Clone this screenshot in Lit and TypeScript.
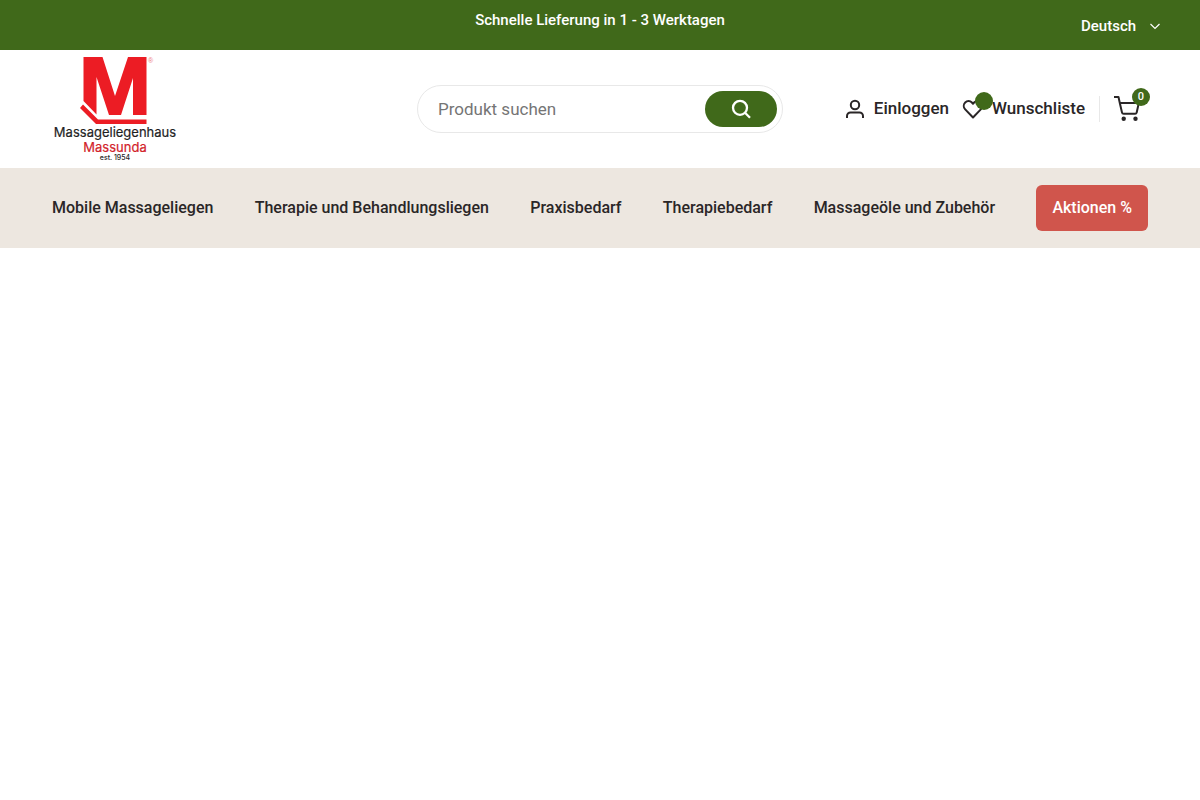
import { LitElement, html, css } from "lit";
import { customElement, property } from "lit/decorators.js";

const GREEN = css`#40691a`;
const INK = css`#2a2627`;

@customElement("brand-logo")
class BrandLogo extends LitElement {
  static styles = css`
    :host { display: block; }
    .logo { display: block; width: 126px; height: 108px; }
    .name { font: 13px Inter, "Liberation Sans", sans-serif; fill: #1f1f1f; stroke: #1f1f1f; stroke-width: 0.2; }
    .brand { font: 13px Inter, "Liberation Sans", sans-serif; fill: #d2232a; stroke: #d2232a; stroke-width: 0.2; }
    .since { font: 500 7px Inter, "Liberation Sans", sans-serif; fill: #1f1f1f; }
    .mark { font: 7px "Liberation Sans", sans-serif; fill: #ee7a80; }
  `;
  render() {
    return html`
      <svg class="logo" viewBox="0 0 126 108" role="img" aria-label="Massageliegenhaus Massunda est. 1954">
        <g fill="#ec1c24">
          <path d="M31.500 2h19l12.500 39L76 2h18.500v58H81V23L69 60H57L44.500 22v37.500L31.500 46z" />
          <path d="M31 49.500l-3 3.500 16 16h50.500v-4.500H46z" />
        </g>
        <text class="mark" x="96" y="8">®</text>
        <text class="name" x="63" y="82" text-anchor="middle">Massageliegenhaus</text>
        <text class="brand" x="63" y="97" text-anchor="middle">Massunda</text>
        <text class="since" x="63" y="105" text-anchor="middle">est. 1954</text>
      </svg>
    `;
  }
}

@customElement("top-bar")
class TopBar extends LitElement {
  static styles = css`
    :host { display: block; background: ${GREEN}; color: #fff; }
    .bar {
      display: grid;
      grid-template-columns: 1fr auto 1fr;
      min-height: 50px;
      padding: 0 39px;
      font-size: 15px;
      font-weight: 500;
      line-height: 20px;
    }
    .message { grid-column: 2; margin: 0; padding-top: 10px; }
    .language { display: grid; justify-self: end; align-content: start; align-items: center; padding-top: 16px; }
    .choice {
      grid-area: 1 / 1;
      appearance: none;
      width: 80px;
      height: 20px;
      padding: 0;
      border: 0;
      background: transparent;
      color: inherit;
      font: inherit;
      cursor: pointer;
    }
    .choice option { color: #222; }
    .arrow { grid-area: 1 / 1; justify-self: end; width: 12px; height: 8px; pointer-events: none; }
  `;
  render() {
    return html`
      <div class="bar">
        <p class="message">Schnelle Lieferung in 1 - 3 Werktagen</p>
        <div class="language">
          <select class="choice" aria-label="Sprache">
            <option selected>Deutsch</option>
          </select>
          <svg class="arrow" viewBox="0 0 12 8" fill="none" stroke="currentColor" stroke-width="1.200">
            <path d="M1.500 2 6 6.500 10.500 2" />
          </svg>
        </div>
      </div>
    `;
  }
}

@customElement("shop-header")
class ShopHeader extends LitElement {
  @property({ type: Number }) cartCount = 0;

  static styles = css`
    :host { display: block; background: #fff; color: ${INK}; }
    .header {
      display: grid;
      grid-template-columns: 1fr minmax(0, 366px) 1fr;
      align-items: center;
      min-height: 118px;
      padding: 0 52px;
    }
    .home { justify-self: start; }
    .search {
      display: flex;
      align-items: center;
      box-sizing: border-box;
      height: 48px;
      padding: 0 5px 0 20px;
      border: 1px solid #e8e8e8;
      border-radius: 24px;
    }
    .query {
      flex: 1;
      min-width: 0;
      padding: 0;
      border: 0;
      outline: 0;
      background: transparent;
      color: inherit;
      font: 400 17px Roboto, sans-serif;
    }
    .query::placeholder { color: #757575; opacity: 1; }
    .submit {
      display: grid;
      place-items: center;
      width: 72px;
      height: 36px;
      padding: 0;
      border: 0;
      border-radius: 18px;
      background: ${GREEN};
      color: #fff;
      cursor: pointer;
    }
    .actions { display: flex; align-items: center; justify-self: end; padding-right: 8px; }
    .action {
      display: flex;
      align-items: center;
      color: inherit;
      text-decoration: none;
      font-size: 17px;
      font-weight: 500;
      line-height: 24px;
    }
    .login { gap: 7px; margin-right: 12px; }
    .wish { gap: 7px; }
    .label { padding-bottom: 2px; }
    .icon {
      display: block;
      width: 24px;
      height: 24px;
      fill: none;
      stroke: currentColor;
      stroke-width: 2;
      stroke-linejoin: round;
    }
    .holder { position: relative; }
    .badge {
      position: absolute;
      top: -5px;
      right: -8px;
      width: 18px;
      height: 18px;
      border-radius: 50%;
      background: ${GREEN};
      color: #fff;
      font-size: 11px;
      line-height: 18px;
      text-align: center;
    }
    .cart { margin-left: 14px; padding-left: 14px; border-left: 1px solid #e8e8e8; }
    .trolley { width: 26px; height: 26px; }
    .count { top: -8px; right: -10px; }
  `;

  render() {
    return html`
      <header class="header">
        <a class="home" href="#" aria-label="Startseite"><brand-logo></brand-logo></a>
        <form class="search" role="search">
          <input class="query" type="search" placeholder="Produkt suchen" aria-label="Produkt suchen" />
          <button class="submit" type="button" aria-label="Suchen">
            <svg class="icon" viewBox="0 0 24 24">
              <g stroke-width="2.300">
                <circle cx="11" cy="10.800" r="7" />
                <path d="m16 15.800 5 5" />
              </g>
            </svg>
          </button>
        </form>
        <div class="actions">
          <a class="action login" href="#">
            <svg class="icon" viewBox="0 0 24 24">
              <circle cx="12" cy="8" r="4.200" />
              <path d="M4 21v-2a3.500 3.500 0 0 1 3.500-3.500h9A3.500 3.500 0 0 1 20 19v2" />
            </svg>
            <span class="label">Einloggen</span>
          </a>
          <a class="action wish" href="#">
            <span class="holder">
              <svg class="icon" viewBox="0 0 24 24">
                <path d="M12 20.500 4.200 12.400a4.900 4.900 0 0 1 0-6.900 4.700 4.700 0 0 1 6.700 0L12 6.700l1.100-1.200a4.700 4.700 0 0 1 6.700 0 4.900 4.900 0 0 1 0 6.900z" />
              </svg>
              <span class="badge"></span>
            </span>
            <span class="label">Wunschliste</span>
          </a>
          <a class="action cart" href="#" aria-label="Warenkorb">
            <span class="holder">
              <svg class="icon trolley" viewBox="0 0 26 26">
                <path d="M0 1h4.500l1.300 6 2.200 9.500q.3 1.300 1.600 1.300h11.500q1.300 0 1.600-1.300L24.800 7h-19" />
                <circle cx="9.700" cy="22.700" r="2.200" fill="currentColor" stroke="none" />
                <circle cx="21.500" cy="22.700" r="2.200" fill="currentColor" stroke="none" />
              </svg>
              <span class="badge count">${this.cartCount}</span>
            </span>
          </a>
        </div>
      </header>
    `;
  }
}

@customElement("main-nav")
class MainNav extends LitElement {
  private items = [
    "Mobile Massageliegen",
    "Therapie und Behandlungsliegen",
    "Praxisbedarf",
    "Therapiebedarf",
    "Massageöle und Zubehör",
  ];

  static styles = css`
    :host { display: block; background: #ede7e0; }
    .nav {
      display: flex;
      align-items: center;
      justify-content: space-between;
      min-height: 80px;
      padding: 0 52px;
      font-size: 16px;
      font-weight: 500;
      line-height: 22px;
    }
    .link { color: ${INK}; text-decoration: none; }
    .sale { padding: 12px 16px; border-radius: 6px; background: #d0554c; color: #fff; }
  `;

  render() {
    return html`
      <nav class="nav" aria-label="Hauptmenü">
        ${this.items.map((item) => html`<a class="link" href="#">${item}</a>`)}
        <a class="link sale" href="#">Aktionen %</a>
      </nav>
    `;
  }
}

@customElement("app-root")
class AppRoot extends LitElement {
  static styles = css`
    :host {
      display: block;
      min-height: 100vh;
      background: #fff;
      font-family: Roboto, "Liberation Sans", sans-serif;
    }
  `;
  render() {
    return html`
      <top-bar></top-bar>
      <shop-header></shop-header>
      <main-nav></main-nav>
    `;
  }
}
